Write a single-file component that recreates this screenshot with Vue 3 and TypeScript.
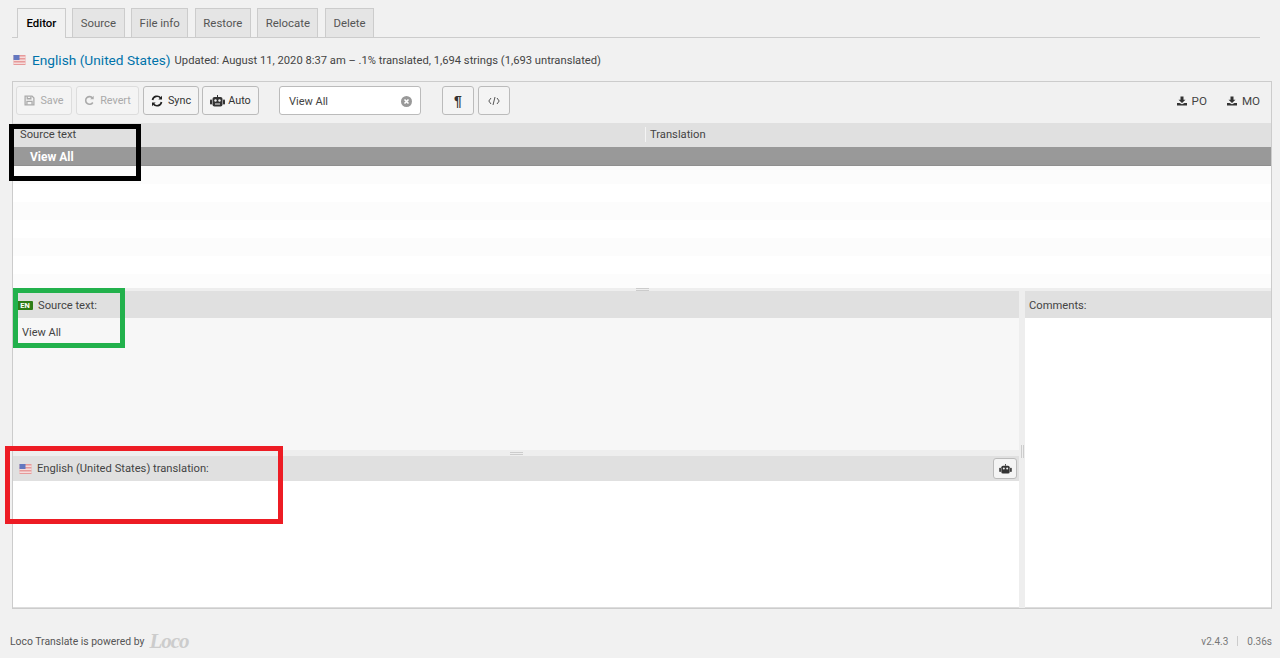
<script setup lang="ts">
const tabs = ['Editor', 'Source', 'File info', 'Restore', 'Relocate', 'Delete'];
const rows = [0, 1, 2, 3, 4, 5, 6];
</script>

<template>
    <div class="page">
        <nav class="tabs">
            <a v-for="(tab, i) in tabs" :key="tab" class="tab" :class="{ active: i === 0 }">{{ tab }}</a>
        </nav>

        <div class="heading">
            <svg class="flag" width="13" height="10" viewBox="0 0 12 10">
                <rect width="12" height="10" fill="#e79a9a" />
                <rect y="1.5" width="12" height="1.5" fill="#f5dcdc" />
                <rect y="4.5" width="12" height="1.5" fill="#f5dcdc" />
                <rect y="7.5" width="12" height="1.5" fill="#f5dcdc" />
                <rect width="6" height="5" fill="#6478c0" />
            </svg>
            <a class="locale">English (United States)</a>
            <span class="meta">Updated: August 11, 2020 8:37 am – .1% translated, 1,694 strings (1,693 untranslated)</span>
        </div>

        <section class="editor">
            <div class="toolbar">
                <button class="btn off save">
                    <svg width="11" height="11" viewBox="0 0 12 12" fill="none" stroke="currentColor" stroke-width="1.4">
                        <path d="M1.2 1.2h7.6l2 2v7.6H1.2z" />
                        <path d="M3.5 1.5v2.6h4V1.5M3.2 10.5V7h5.6v3.5" />
                    </svg>
                    Save
                </button>
                <button class="btn off revert">
                    <svg width="11" height="11" viewBox="0 0 12 12" fill="none" stroke="currentColor" stroke-width="1.7">
                        <path d="M9.6 8.2A4.2 4.2 0 1 1 9.4 3.4" />
                        <path d="M10.6 0.8v3.8H6.8z" fill="currentColor" stroke="none" />
                    </svg>
                    Revert
                </button>
                <button class="btn sync">
                    <svg width="12" height="12" viewBox="0 0 12 12" fill="none" stroke="#222" stroke-width="1.7">
                        <path d="M1.5 5A4.6 4.6 0 0 1 9.6 3" />
                        <path d="M10.5 7A4.6 4.6 0 0 1 2.4 9" />
                        <path d="M11 .8v3.6H7.4z" fill="#222" stroke="none" />
                        <path d="M1 11.2V7.6h3.6z" fill="#222" stroke="none" />
                    </svg>
                    Sync
                </button>
                <button class="btn auto">
                    <svg width="15" height="12" viewBox="0 0 15 12">
                        <path d="M7 0h1v2H7z" fill="#333" />
                        <rect x="2.5" y="2" width="10" height="9.5" rx="2" fill="#333" />
                        <rect x="0" y="4.5" width="2" height="5" rx=".8" fill="#333" />
                        <rect x="13" y="4.5" width="2" height="5" rx=".8" fill="#333" />
                        <circle cx="5.5" cy="5.5" r="1.2" fill="#eee" />
                        <circle cx="9.5" cy="5.5" r="1.2" fill="#eee" />
                        <rect x="5" y="8.5" width="5" height="1" fill="#eee" />
                    </svg>
                    Auto
                </button>
                <div class="filter">
                    <span>View All</span>
                    <svg width="11" height="11" viewBox="0 0 11 11">
                        <circle cx="5.5" cy="5.5" r="5.5" fill="#999" />
                        <path d="M3.5 3.5l4 4M7.5 3.5l-4 4" stroke="#fff" stroke-width="1.6" />
                    </svg>
                </div>
                <button class="btn square pilcrow">¶</button>
                <button class="btn square code">
                    <svg width="12" height="10" viewBox="0 0 12 10" fill="none" stroke="#555" stroke-width="1">
                        <path d="M3 2L.8 5 3 8M9 2l2.2 3L9 8M7 1L5 9" />
                    </svg>
                </button>
                <div class="downloads">
                    <a class="dl">
                        <svg width="10" height="10" viewBox="0 0 12 11">
                            <path d="M4.2 0h3.6v4h2.4L6 8 1.8 4h2.4z" fill="#333" />
                            <path d="M0 8h3l3 1.4L9 8h3v3H0z" fill="#333" />
                        </svg>
                        PO
                    </a>
                    <a class="dl">
                        <svg width="10" height="10" viewBox="0 0 12 11">
                            <path d="M4.2 0h3.6v4h2.4L6 8 1.8 4h2.4z" fill="#333" />
                            <path d="M0 8h3l3 1.4L9 8h3v3H0z" fill="#333" />
                        </svg>
                        MO
                    </a>
                </div>
            </div>

            <div class="grid-head">
                <div class="col-source">Source text</div>
                <div class="col-target">Translation</div>
            </div>
            <div class="selected-row">View All</div>
            <div class="rows">
                <div v-for="r in rows" :key="r" class="row"></div>
            </div>

            <div class="h-split"><i></i></div>

            <div class="panels">
                <div class="main-panel">
                    <div class="panel-head">
                        <span class="lang">EN</span>
                        Source text:
                    </div>
                    <div class="source-body">View All</div>
                    <div class="h-split inner"><i></i></div>
                    <div class="panel-head target-head">
                        <svg class="flag" width="13" height="10" viewBox="0 0 12 10">
                            <rect width="12" height="10" fill="#e79a9a" />
                            <rect y="1.5" width="12" height="1.5" fill="#f5dcdc" />
                            <rect y="4.5" width="12" height="1.5" fill="#f5dcdc" />
                            <rect y="7.5" width="12" height="1.5" fill="#f5dcdc" />
                            <rect width="6" height="5" fill="#6478c0" />
                        </svg>
                        English (United States) translation:
                        <button class="robot">
                            <svg width="13" height="10" viewBox="0 0 15 12">
                                <path d="M7 0h1v2H7z" fill="#333" />
                                <rect x="2.5" y="2" width="10" height="9.5" rx="2" fill="#333" />
                                <rect x="0" y="4.5" width="2" height="5" rx=".8" fill="#333" />
                                <rect x="13" y="4.5" width="2" height="5" rx=".8" fill="#333" />
                                <circle cx="5.5" cy="5.5" r="1.2" fill="#eee" />
                                <circle cx="9.5" cy="5.5" r="1.2" fill="#eee" />
                            </svg>
                        </button>
                    </div>
                    <div class="target-body"></div>
                </div>
                <div class="v-split"><i></i></div>
                <div class="side-panel">
                    <div class="panel-head comments">Comments:</div>
                    <div class="comment-body"></div>
                </div>
            </div>
        </section>

        <footer class="footer">
            <div class="powered">Loco Translate is powered by <span class="logo">Loco</span></div>
            <div class="version">v2.4.3 <i></i> 0.36s</div>
        </footer>

        <div class="mark mark-black"></div>
        <div class="mark mark-green"></div>
        <div class="mark mark-red"></div>
    </div>
</template>

<style>
html,
body {
    margin: 0;
    background: #f1f1f1;
}
</style>

<style scoped>
.page {
    position: relative;
    width: 1280px;
    height: 658px;
    overflow: hidden;
    padding: 8px 8px 0 12px;
    box-sizing: border-box;
    background: #f1f1f1;
    font-family: Roboto, "Open Sans", sans-serif;
    font-size: 11.2px;
    color: #444;
}
.tabs {
    display: flex;
    height: 29px;
    padding-left: 5px;
    gap: 6.5px;
    border-bottom: 1px solid #ccc;
    margin-right: 12px;
}
.tab {
    height: 28px;
    line-height: 28px;
    padding: 0 7.5px;
    background: #e5e5e5;
    border: 1px solid #ccc;
    border-bottom: 0;
    color: #555;
    font-size: 11.4px;
}
.tab.active {
    height: 29px;
    padding: 0 8.5px;
    background: #f1f1f1;
    color: #000;
    font-weight: 500;
    font-size: 11.4px;
}
.heading {
    display: flex;
    align-items: center;
    height: 41px;
    padding: 2px 0 0 1px;
}
.flag {
    flex: none;
}
.heading .flag,
.locale {
    margin-top: -2px;
}
.locale {
    margin-left: 6px;
    font-size: 13.7px;
    color: #0073aa;
}
.meta {
    margin-left: 4px;
}
.editor {
    width: 1260px;
    height: 528px;
    border: 1px solid #ccc;
    box-sizing: border-box;
    display: flex;
    flex-direction: column;
}
.toolbar {
    height: 41px;
    flex: none;
    display: flex;
    align-items: flex-start;
    padding: 4px 11px 0 3px;
    box-sizing: border-box;
    font-size: 10.8px;
}
.btn {
    height: 29px;
    box-sizing: border-box;
    padding: 0;
    margin-right: 4px;
    display: flex;
    align-items: center;
    justify-content: center;
    gap: 5px;
    background: #f4f4f4;
    border: 1px solid #bbb;
    border-radius: 3px;
    font: inherit;
    color: #333;
}
.btn.off {
    border-color: #ddd;
    color: #aaa;
}
.save { width: 56px; }
.revert { width: 63px; }
.sync { width: 56px; margin-right: 3px; }
.auto { width: 57px; margin-right: 20px; gap: 3px; }
.filter {
    width: 142px;
    height: 29px;
    box-sizing: border-box;
    margin-right: 21px;
    padding: 1px 8px 0 9px;
    display: flex;
    align-items: center;
    justify-content: space-between;
    background: #fff;
    border: 1px solid #bbb;
    border-radius: 3px;
    font-size: 11px;
}
.square { width: 32px; }
.btn.pilcrow {
    font-family: "Liberation Sans", sans-serif;
    font-weight: 700;
    font-size: 14px;
}
.downloads {
    margin-left: auto;
    display: flex;
    gap: 20px;
    height: 29px;
    align-items: center;
    font-size: 11.6px;
}
.dl {
    display: flex;
    align-items: center;
    gap: 5px;
    color: #444;
}
.grid-head {
    height: 24px;
    flex: none;
    display: flex;
    background: #e0e0e0;
    line-height: 23px;
}
.col-source {
    width: 625px;
    padding-left: 7px;
    flex: none;
}
.col-target {
    padding-left: 4px;
    border-left: 1px solid #f4f4f4;
    height: 15px;
    line-height: 15px;
    margin-top: 4px;
}
.selected-row {
    height: 19px;
    flex: none;
    box-sizing: border-box;
    padding-left: 17px;
    line-height: 20px;
    background: #999;
    border-bottom: 1px solid #8f8f8f;
    color: #fff;
    font-weight: 700;
    font-size: 12px;
}
.rows {
    height: 122px;
    flex: none;
    overflow: hidden;
}
.row {
    height: 18px;
    background: #fff;
}
.row:nth-child(odd) {
    background: #fcfcfc;
}
.h-split {
    height: 3px;
    flex: none;
    background: #eee;
    display: flex;
    justify-content: center;
    align-items: center;
}
.h-split i {
    width: 13px;
    height: 3px;
    box-sizing: border-box;
    border-top: 1px solid #ccc;
    border-bottom: 1px solid #ccc;
}
.h-split.inner {
    height: 6px;
}
.panels {
    flex: 1;
    min-height: 0;
    display: flex;
}
.main-panel {
    width: 1006px;
    flex: none;
    display: flex;
    flex-direction: column;
    border-bottom: 1px solid #ddd;
}
.panel-head {
    height: 27px;
    flex: none;
    box-sizing: border-box;
    display: flex;
    align-items: center;
    background: #e0e0e0;
    padding: 2px 0 0 4px;
}
.lang {
    margin-right: 5px;
    width: 16px;
    height: 9px;
    line-height: 9px;
    text-align: center;
    background: #2e7d18;
    border-radius: 1px;
    color: #fff;
    font-size: 7.5px;
    font-weight: 700;
}
.source-body {
    height: 132px;
    flex: none;
    background: #f7f7f7;
    box-sizing: border-box;
    padding: 8px 9px;
    color: #444;
    font-size: 11px;
}
.target-head {
    height: 25px;
    gap: 5px;
    padding: 0 0 0 6px;
}
.robot {
    margin: 0 2px 0 auto;
    width: 24px;
    height: 21px;
    padding: 0;
    display: flex;
    align-items: center;
    justify-content: center;
    background: #f4f4f4;
    border: 1px solid #bbb;
    border-radius: 3px;
}
.target-body {
    flex: 1;
    background: #fff;
}
.v-split {
    width: 6px;
    flex: none;
    background: #eee;
    display: flex;
    align-items: center;
    justify-content: center;
}
.v-split i {
    width: 3px;
    height: 13px;
    box-sizing: border-box;
    border-left: 1px solid #ccc;
    border-right: 1px solid #ccc;
    margin-top: 4px;
}
.side-panel {
    flex: 1;
    display: flex;
    flex-direction: column;
    border-bottom: 1px solid #ddd;
}
.comments {
    padding-left: 4px;
}
.comment-body {
    flex: 1;
    background: #fff;
}
.footer {
    display: flex;
    justify-content: space-between;
    align-items: center;
    padding: 21px 0 0 0;
    margin-left: -2px;
    font-size: 10.4px;
    color: #555;
}
.powered {
    display: flex;
    align-items: center;
    gap: 5px;
}
.logo {
    font-family: "Liberation Serif", serif;
    font-style: italic;
    font-weight: 700;
    font-size: 21px;
    letter-spacing: -1px;
    line-height: 22px;
    color: #ccc;
}
.version {
    display: flex;
    align-items: center;
    gap: 9px;
    color: #777;
    font-size: 10px;
}
.version i {
    width: 1px;
    height: 10px;
    background: #ccc;
}
.mark {
    position: absolute;
    box-sizing: border-box;
    border-style: solid;
    border-width: 5px;
}
.mark-black {
    left: 9px;
    top: 124px;
    width: 132px;
    height: 57px;
    border-color: #000;
}
.mark-green {
    left: 13px;
    top: 288px;
    width: 112px;
    height: 60px;
    border-color: #22b14c;
}
.mark-red {
    left: 5px;
    top: 446px;
    width: 278px;
    height: 78px;
    border-color: #ed1c24;
}
</style>
